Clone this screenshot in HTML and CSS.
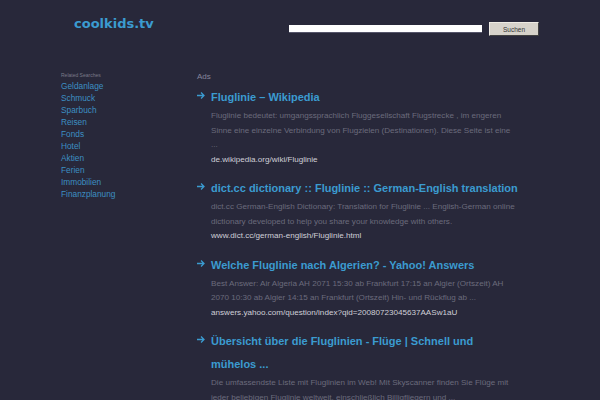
FILE: index.html
```html
<!DOCTYPE html>
<html lang="de">
<head>
  <meta charset="UTF-8">
  <meta name="viewport" content="width=device-width, initial-scale=1">
  <title>coolkids.tv</title>
  <link rel="stylesheet" href="styles.css">
</head>
<body>

<div class="wrapper">
  <div class="header">
    <a class="logo" href="#">coolkids.tv</a>
    <form class="search">
      <input type="text" class="search-input">
      <button type="button" class="search-btn">Suchen</button>
    </form>
  </div>

  <div class="content">
    <div class="sidebar">
      <div class="side-title">Related Searches</div>
      <ul class="related">
        <li><a href="#">Geldanlage</a></li>
        <li><a href="#">Schmuck</a></li>
        <li><a href="#">Sparbuch</a></li>
        <li><a href="#">Reisen</a></li>
        <li><a href="#">Fonds</a></li>
        <li><a href="#">Hotel</a></li>
        <li><a href="#">Aktien</a></li>
        <li><a href="#">Ferien</a></li>
        <li><a href="#">Immobilien</a></li>
        <li><a href="#">Finanzplanung</a></li>
      </ul>
    </div>

    <div class="main">
      <div class="ads-label">Ads</div>

      <div class="result">
        <a class="result-title" href="#">Fluglinie – Wikipedia</a>
        <p class="result-desc">Fluglinie bedeutet: umgangssprachlich Fluggesellschaft Flugstrecke , im engeren Sinne eine einzelne Verbindung von Flugzielen (Destinationen). Diese Seite ist eine ...</p>
        <div class="result-url">de.wikipedia.org/wiki/Fluglinie</div>
      </div>

      <div class="result">
        <a class="result-title" href="#">dict.cc dictionary :: Fluglinie :: German-English translation</a>
        <p class="result-desc">dict.cc German-English Dictionary: Translation for Fluglinie ... English-German online dictionary developed to help you share your knowledge with others.</p>
        <div class="result-url">www.dict.cc/german-english/Fluglinie.html</div>
      </div>

      <div class="result">
        <a class="result-title" href="#">Welche Fluglinie nach Algerien? - Yahoo! Answers</a>
        <p class="result-desc">Best Answer: Air Algeria AH 2071 15:30 ab Frankfurt 17:15 an Algier (Ortszeit) AH 2070 10:30 ab Algier 14:15 an Frankfurt (Ortszeit) Hin- und Rückflug ab ...</p>
        <div class="result-url">answers.yahoo.com/question/index?qid=20080723045637AASw1aU</div>
      </div>

      <div class="result">
        <a class="result-title" href="#">Übersicht über die Fluglinien - Flüge | Schnell und mühelos ...</a>
        <p class="result-desc">Die umfassendste Liste mit Fluglinien im Web! Mit Skyscanner finden Sie Flüge mit jeder beliebigen Fluglinie weltweit, einschließlich Billigfliegern und ...</p>
        <div class="result-url">www.skyscanner.de/fluglinien.html</div>
      </div>
    </div>
  </div>
</div>

</body>
</html>
```

FILE: styles.css
```css
* { margin: 0; padding: 0; box-sizing: border-box; }
body {
  font-family: 'Liberation Sans', Arial, sans-serif;
  background: #28283a;
  color: #6e6e7e;
}
a {
  text-decoration: none;
}
.wrapper {
  width: 478px;
  margin: 0 auto;
}
.header {
  display: flex;
  align-items: flex-start;
  height: 69px;
}
.logo {
  font-family: 'DejaVu Sans', Verdana, sans-serif;
  font-weight: bold;
  font-size: 13px;
  line-height: 16px;
  color: #3b9bd0;
  margin: 16px 0 0 13px;
}
.search {
  display: flex;
  align-items: center;
  margin: 22px 0 0 auto;
  gap: 7px;
}
.search-input {
  width: 193px;
  height: 8px;
  border: none;
  border-bottom: 1px solid #55556a;
  background: #ffffff;
}
.search-btn {
  width: 50px;
  height: 14px;
  font-family: 'Liberation Sans', Arial, sans-serif;
  font-size: 6.5px;
  color: #333;
  background: #d6d2ca;
  border: 1px solid;
  border-color: #eeebe4 #404040 #404040 #eeebe4;
}
.content {
  display: flex;
}
.sidebar {
  width: 136px;
  flex-shrink: 0;
}
.side-title {
  font-size: 5px;
  line-height: 12px;
  color: #7a7a88;
  margin-bottom: -1px;
}
.related {
  list-style: none;
}
.related li {
  font-size: 8.3px;
  line-height: 12px;
}
.related a {
  color: #3d8fc2;
}
.main {
  width: 322px;
}
.ads-label {
  font-size: 8px;
  line-height: 12px;
  color: #85859a;
  margin: 2px 0 3px;
}
.result {
  position: relative;
  padding-left: 14px;
  margin-bottom: 10px;
}
.result::before {
  content: '';
  position: absolute;
  left: 0;
  top: 6px;
  width: 8px;
  height: 7px;
  background: url("data:image/svg+xml,%3Csvg xmlns='http://www.w3.org/2000/svg' width='8' height='7' viewBox='0 0 8 7'%3E%3Cpath d='M0 3.5H7M4 0.5L7 3.5L4 6.5' fill='none' stroke='%233b9bd0' stroke-width='1.3'/%3E%3C/svg%3E") no-repeat;
}
.result-title {
  display: block;
  font-weight: bold;
  font-size: 11px;
  line-height: 23px;
  color: #3b9bd0;
}
.result-desc {
  font-size: 8.1px;
  line-height: 14.5px;
  color: #6b6b7c;
}
.result-url {
  font-size: 8.1px;
  line-height: 14.5px;
  color: #cfcfd8;
}
```
